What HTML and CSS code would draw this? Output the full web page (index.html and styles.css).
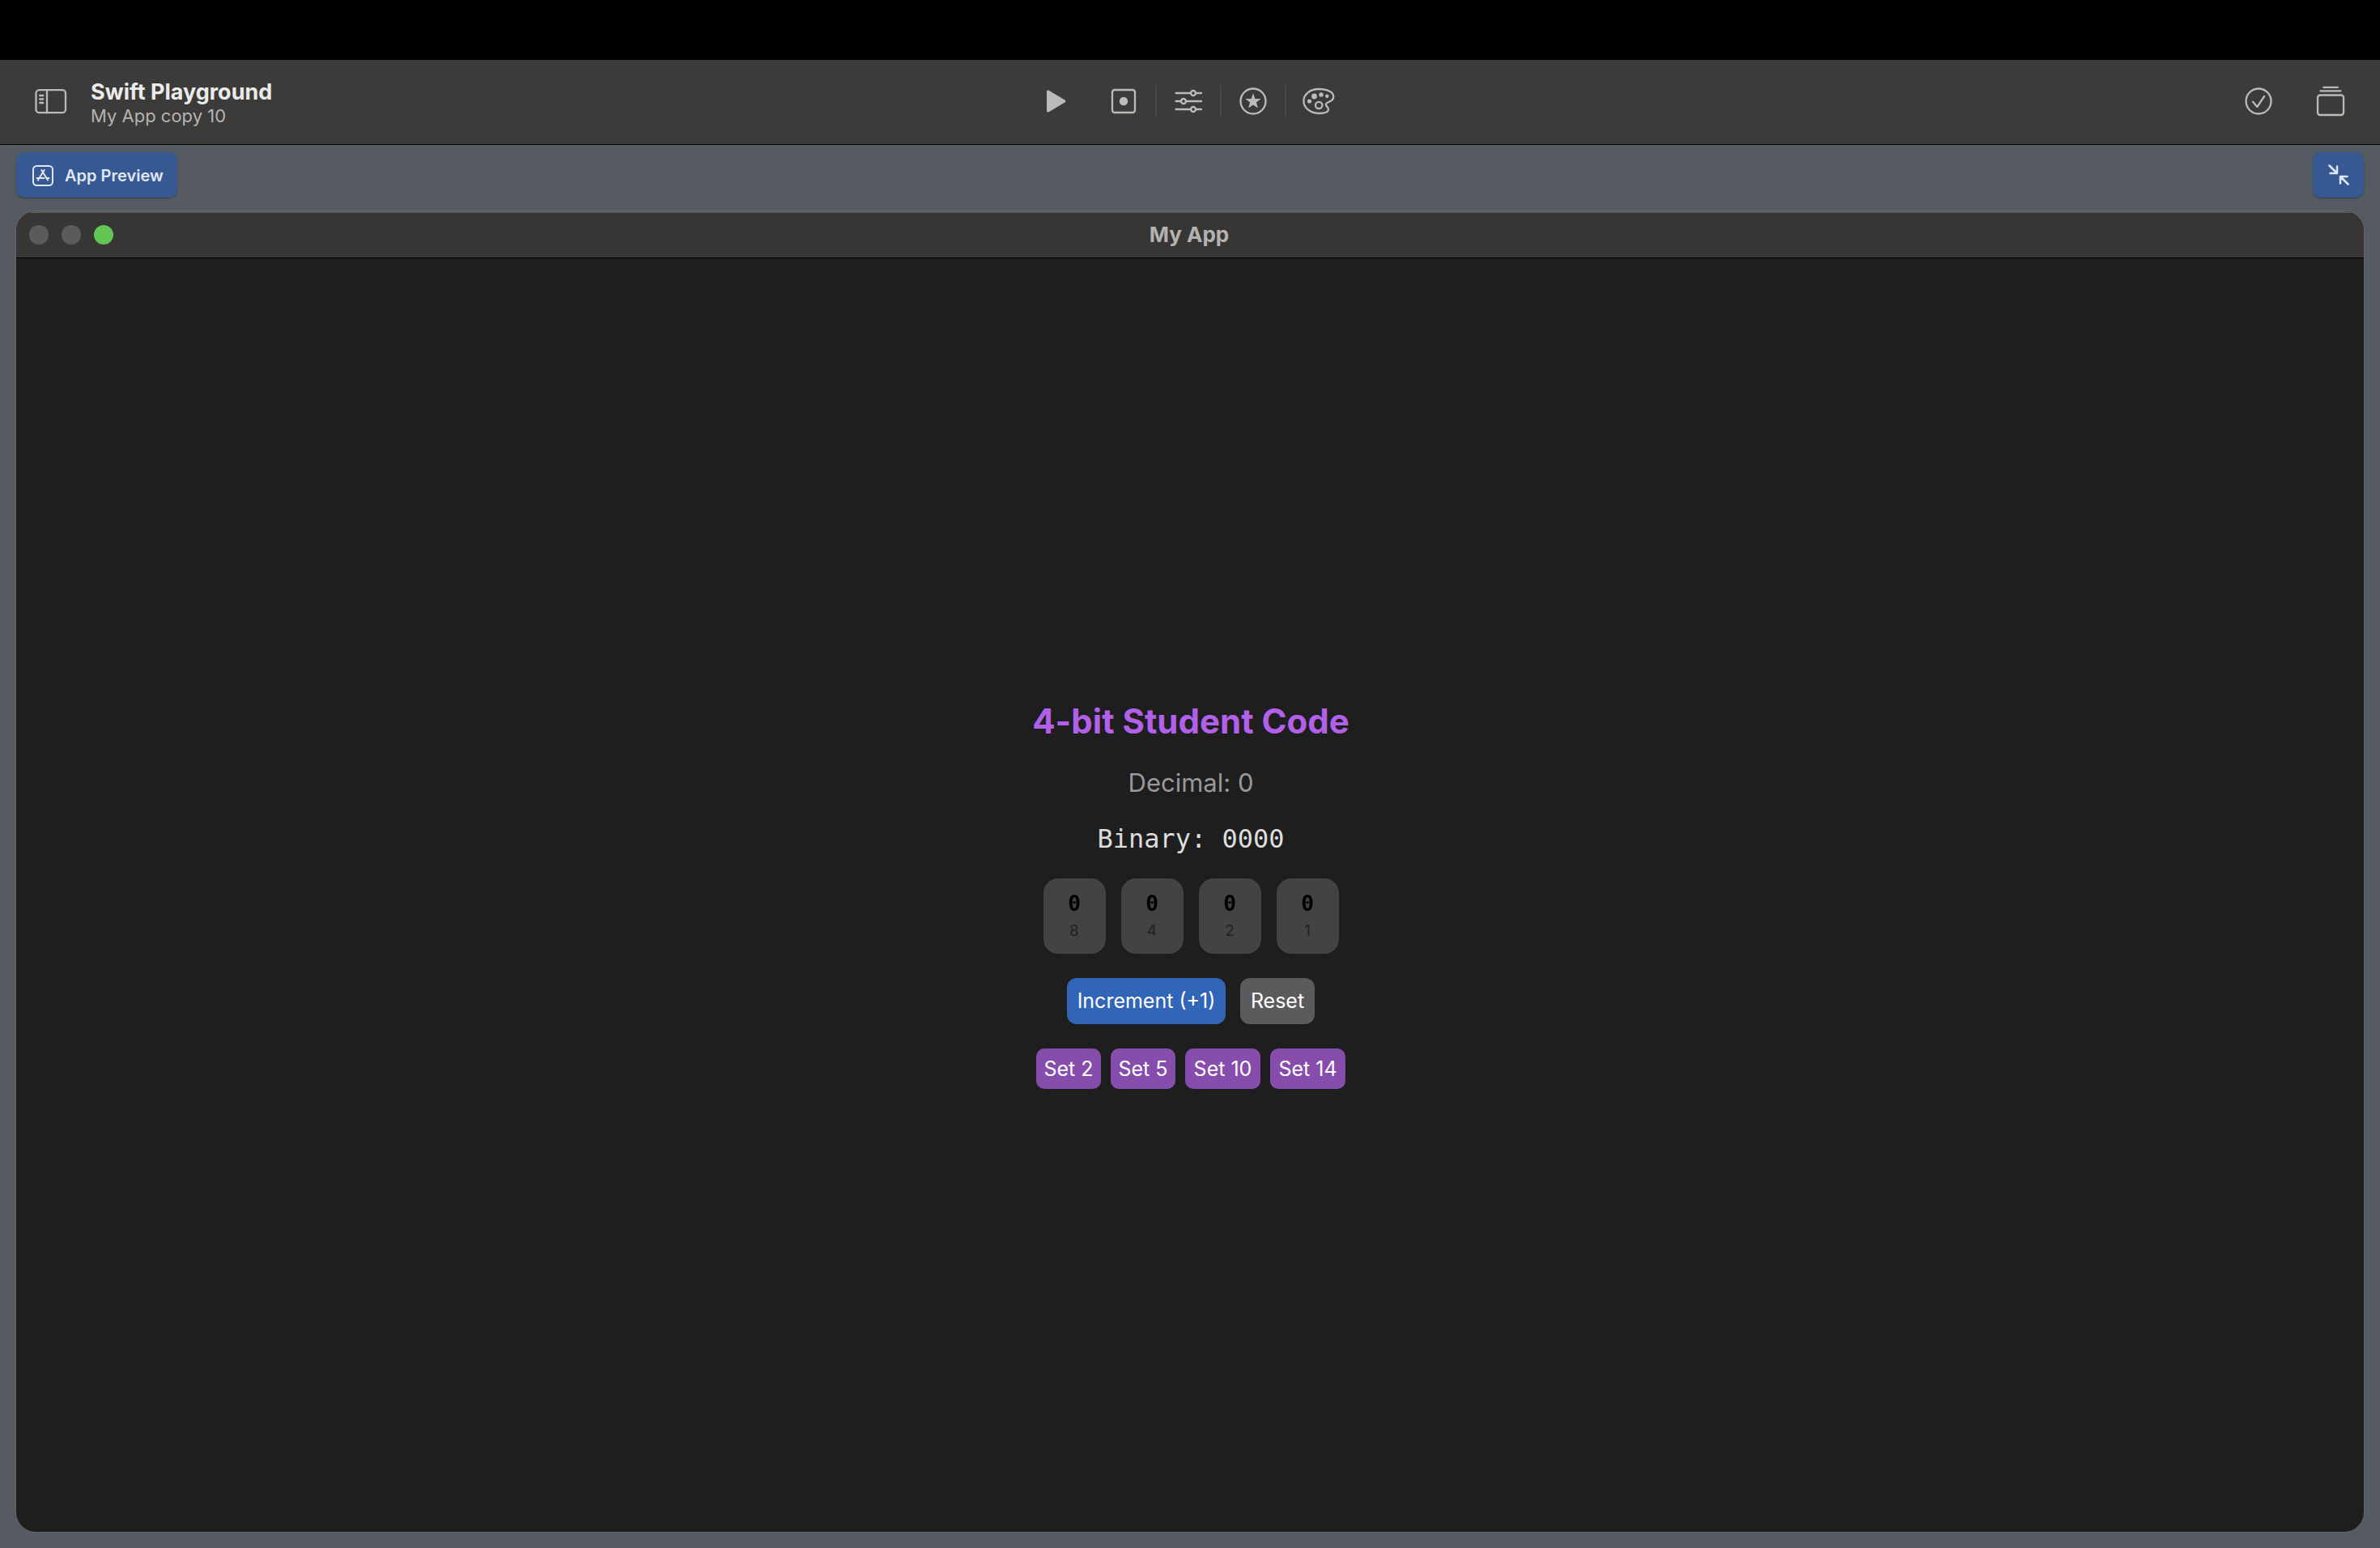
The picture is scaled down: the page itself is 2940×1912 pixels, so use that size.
FILE: index.html
```html
<!DOCTYPE html>
<html lang="en">
<head>
<meta charset="utf-8">
<title>Swift Playground</title>
<link rel="stylesheet" href="styles.css">
</head>
<body>
<div class="menu-strip"></div>
<header class="toolbar">
  <div class="toolbar-left">
    <button class="icon-button sidebar-button" aria-label="Toggle sidebar">
      <svg class="icon" width="40" height="32" viewBox="0 0 40 32">
        <rect x="1.5" y="2.2" width="36.500" height="28" rx="4"/>
        <path d="M15 2.2V30.2M6.2 9h4M6.2 13.5h4M6.2 18h4"/>
      </svg>
    </button>
    <div class="document">
      <h1 class="document-title">Swift Playground</h1>
      <p class="document-name">My App copy 10</p>
    </div>
  </div>
  <nav class="toolbar-center" aria-label="Tools">
    <button class="icon-button play-button" aria-label="Run">
      <svg class="icon" width="36" height="36" viewBox="0 0 36 36">
        <path class="solid" d="M6 6.200C6 4.500 7.400 4.100 8.700 4.800L28.400 16.500C29.600 17.300 29.600 18.700 28.400 19.500L8.700 31.200C7.400 31.900 6 31.500 6 29.800Z"/>
      </svg>
    </button>
    <div class="tool-group">
      <button class="icon-button" aria-label="Record">
        <svg class="icon" width="36" height="36" viewBox="0 0 36 36">
          <rect x="4" y="4" width="28" height="28" rx="3"/>
          <circle class="solid" cx="18" cy="18" r="5.200"/>
        </svg>
      </button>
      <button class="icon-button" aria-label="Settings">
        <svg class="icon" width="36" height="36" viewBox="0 0 36 36">
          <path d="M2.500 8H21M27 8h7M2.500 18H9M15 18h19M2.500 28H21M27 28h7"/>
          <circle cx="24" cy="8" r="3"/><circle cx="12" cy="18" r="3"/><circle cx="24" cy="28" r="3"/>
        </svg>
      </button>
      <button class="icon-button" aria-label="Favorites">
        <svg class="icon" width="36" height="36" viewBox="0 0 36 36">
          <circle cx="18" cy="18" r="15.500"/>
          <path class="solid" d="M18 8.200L20.400 15.100H27.600L21.900 19.500L24 26.600L18 22.400L12 26.600L14.100 19.500L8.400 15.100H15.600Z"/>
        </svg>
      </button>
      <button class="icon-button" aria-label="Themes">
        <svg class="icon" width="42" height="36" viewBox="0 0 42 36">
          <path d="M21 3C10 3 2.400 9.500 2.400 17.800C2.400 26.500 11 33 21.500 33C28.500 33 33 31.200 33 28C33 25.500 29.800 24.200 29.800 22C29.800 18.400 39.300 19.500 39.300 12.600C39.300 6.500 31.500 3 21 3Z"/>
          <circle class="solid" cx="9.500" cy="18" r="2.600"/>
          <circle class="solid" cx="15.500" cy="12" r="3.400"/>
          <circle class="solid" cx="24" cy="10" r="2.700"/>
          <circle class="solid" cx="31.300" cy="11.700" r="2.200"/>
          <circle cx="21.200" cy="23" r="4.200"/>
        </svg>
      </button>
    </div>
  </nav>
  <div class="toolbar-right">
    <button class="icon-button bare" aria-label="Status">
      <svg class="icon" width="38" height="38" viewBox="0 0 38 38">
        <circle cx="19" cy="19" r="15.500"/>
        <path d="M12 19.800L17.300 26L26 13"/>
      </svg>
    </button>
    <button class="icon-button bare" aria-label="Library">
      <svg class="icon" width="38" height="38" viewBox="0 0 38 38">
        <rect x="3" y="11.500" width="32" height="24.500" rx="3"/>
        <path d="M6.500 6.300H31.500M10.200 1.800H27.800"/>
      </svg>
    </button>
  </div>
</header>
<main class="stage">
  <div class="preview-bar">
    <button class="preview-button">
      <svg class="preview-icon" width="26" height="26" viewBox="0 0 26 26">
        <rect x="1" y="1" width="24" height="24" rx="4.500"/>
        <path d="M11.200 6L13 8.800L14.800 6M13 8.800L8.500 16M13 8.800L19 18.500M5.500 16H14.500M18 16H20.500M7.500 17.800L7 18.600"/>
      </svg>
      App Preview
    </button>
    <button class="preview-button collapse-button" aria-label="Collapse preview">
      <svg class="collapse-icon" width="26" height="26" viewBox="0 0 26 26">
        <path d="M1.500 1.500L11 11M11 2.500V11H2.500M24.500 24.500L15 15M15 23.500V15H23.500"/>
      </svg>
    </button>
  </div>
  <section class="window">
    <div class="titlebar">
      <div class="lights">
        <button class="light" aria-label="Close"></button>
        <button class="light" aria-label="Minimize"></button>
        <button class="light zoom" aria-label="Zoom"></button>
      </div>
      <h2 class="window-title">My App</h2>
    </div>
    <div class="app">
      <h3 class="app-title">4-bit Student Code</h3>
      <p class="decimal">Decimal: 0</p>
      <p class="binary">Binary: 0000</p>
      <div class="bits">
        <div class="bit"><span class="bit-value">0</span><span class="bit-weight">8</span></div>
        <div class="bit"><span class="bit-value">0</span><span class="bit-weight">4</span></div>
        <div class="bit"><span class="bit-value">0</span><span class="bit-weight">2</span></div>
        <div class="bit"><span class="bit-value">0</span><span class="bit-weight">1</span></div>
      </div>
      <div class="actions">
        <button class="action increment">Increment (+1)</button>
        <button class="action reset">Reset</button>
      </div>
      <div class="presets">
        <button class="preset">Set 2</button>
        <button class="preset">Set 5</button>
        <button class="preset wide">Set 10</button>
        <button class="preset wide">Set 14</button>
      </div>
    </div>
  </section>
</main>
</body>
</html>
```
FILE: styles.css
```css
* {
  box-sizing: border-box;
}

body {
  margin: 0;
  min-height: 100vh;
  display: flex;
  flex-direction: column;
  background: #000;
  font-family: Inter, "Liberation Sans", sans-serif;
}

h1, h2, h3, p {
  margin: 0;
}

button {
  margin: 0;
  padding: 0;
  border: 0;
  background: none;
  color: inherit;
  font: inherit;
  white-space: nowrap;
}

svg {
  display: block;
}

.menu-strip {
  height: 74px;
}

/* Toolbar */
.toolbar {
  height: 105px;
  padding: 0 42px 2px 36px;
  display: grid;
  grid-template-columns: 1fr auto 1fr;
  align-items: center;
  background: #3c3b39;
  border-bottom: 1px solid #000;
}

.toolbar-left {
  display: flex;
  align-items: center;
  gap: 22px;
}

.document {
  padding-top: 2px;
}

.document-title {
  font-size: 27px;
  line-height: 33px;
  font-weight: 700;
  color: #ebebea;
}

.document-name {
  font-size: 22px;
  line-height: 26px;
  color: #b4b4b2;
}

.toolbar-center {
  display: flex;
  align-items: center;
  gap: 4px;
}

.tool-group {
  display: flex;
}

.icon-button {
  width: 80px;
  height: 40px;
  display: flex;
  align-items: center;
  justify-content: center;
}

.sidebar-button {
  width: 54px;
}

.bare {
  width: 38px;
}

.tool-group .icon-button:not(:last-child) {
  border-right: 2px solid #494846;
}

.icon {
  fill: none;
  stroke: #bcbbb9;
  stroke-width: 2.3;
  stroke-linecap: round;
  stroke-linejoin: round;
}

.icon .solid {
  fill: #bcbbb9;
  stroke: none;
}

.toolbar-right {
  display: flex;
  justify-content: flex-end;
  gap: 51px;
}

/* Preview area */
.stage {
  flex: 1;
  display: flex;
  flex-direction: column;
  padding: 9px 20px 20px;
  background: #565b62;
}

.preview-bar {
  display: flex;
  justify-content: space-between;
  margin-bottom: 17px;
}

.preview-button {
  height: 56px;
  padding: 1px 17px 0 20px;
  display: flex;
  align-items: center;
  gap: 14px;
  border-radius: 10px;
  background: #365994;
  box-shadow: 0 1px 2px rgba(0, 0, 0, 0.3);
  color: #e0e7f2;
  font-size: 20px;
  font-weight: 600;
}

.collapse-button {
  width: 63px;
  padding: 0;
  justify-content: center;
}

.preview-icon,
.collapse-icon {
  fill: none;
  stroke: #e0e7f2;
  stroke-width: 2;
  stroke-linecap: round;
  stroke-linejoin: round;
}

.collapse-icon {
  stroke-width: 2.5;
}

/* App window */
.window {
  flex: 1;
  display: flex;
  flex-direction: column;
  border-radius: 24px;
  overflow: hidden;
  background: #1e1e1e;
  box-shadow: 0 0 0 1px #64676a;
}

.titlebar {
  height: 58px;
  padding: 0 18px 0 16px;
  display: grid;
  grid-template-columns: 1fr auto 1fr;
  align-items: center;
  background: #383634;
  box-shadow: inset 0 2px #5e5c5a;
  border-bottom: 1px solid #000;
}

.lights {
  display: flex;
  gap: 16px;
}

.light {
  width: 24px;
  height: 24px;
  border-radius: 50%;
  background: #5c5b59;
}

.zoom {
  background: #62c655;
}

.window-title {
  font-size: 26px;
  line-height: 32px;
  font-weight: 700;
  color: #b3b2b0;
}

.app {
  flex: 1;
  padding: 0 0 2px 2px;
  display: flex;
  flex-direction: column;
  align-items: center;
  justify-content: center;
  gap: 30px;
}

.app-title {
  font-size: 42px;
  line-height: 52px;
  font-weight: 700;
  color: #b260ea;
}

.decimal {
  font-size: 31px;
  line-height: 40px;
  color: #98989d;
}

.binary {
  font-family: "DejaVu Sans Mono", "Liberation Mono", monospace;
  font-size: 32px;
  line-height: 38px;
  color: #dddddd;
}

.bits {
  display: flex;
  gap: 19px;
}

.bit {
  width: 77px;
  padding: 16px 0;
  display: flex;
  flex-direction: column;
  align-items: center;
  gap: 6px;
  border-radius: 18px;
  background: #434344;
}

.bit-value {
  font-family: "DejaVu Sans Mono", "Liberation Mono", monospace;
  font-size: 26px;
  line-height: 31px;
  font-weight: 700;
  color: #000;
}

.bit-weight {
  font-size: 19px;
  line-height: 24px;
  color: #222223;
}

.actions {
  display: flex;
  gap: 18px;
}

.action {
  height: 57px;
  border-radius: 12px;
  color: #fff;
  font-size: 25px;
}

.increment {
  width: 196px;
  background: #3165b7;
}

.reset {
  width: 92px;
  background: #5b5b5d;
}

.presets {
  display: flex;
  gap: 12px;
}

.preset {
  width: 80px;
  height: 50px;
  border-radius: 10px;
  background: #874dad;
  color: #fff;
  font-size: 25px;
}

.wide {
  width: 93px;
}
```
